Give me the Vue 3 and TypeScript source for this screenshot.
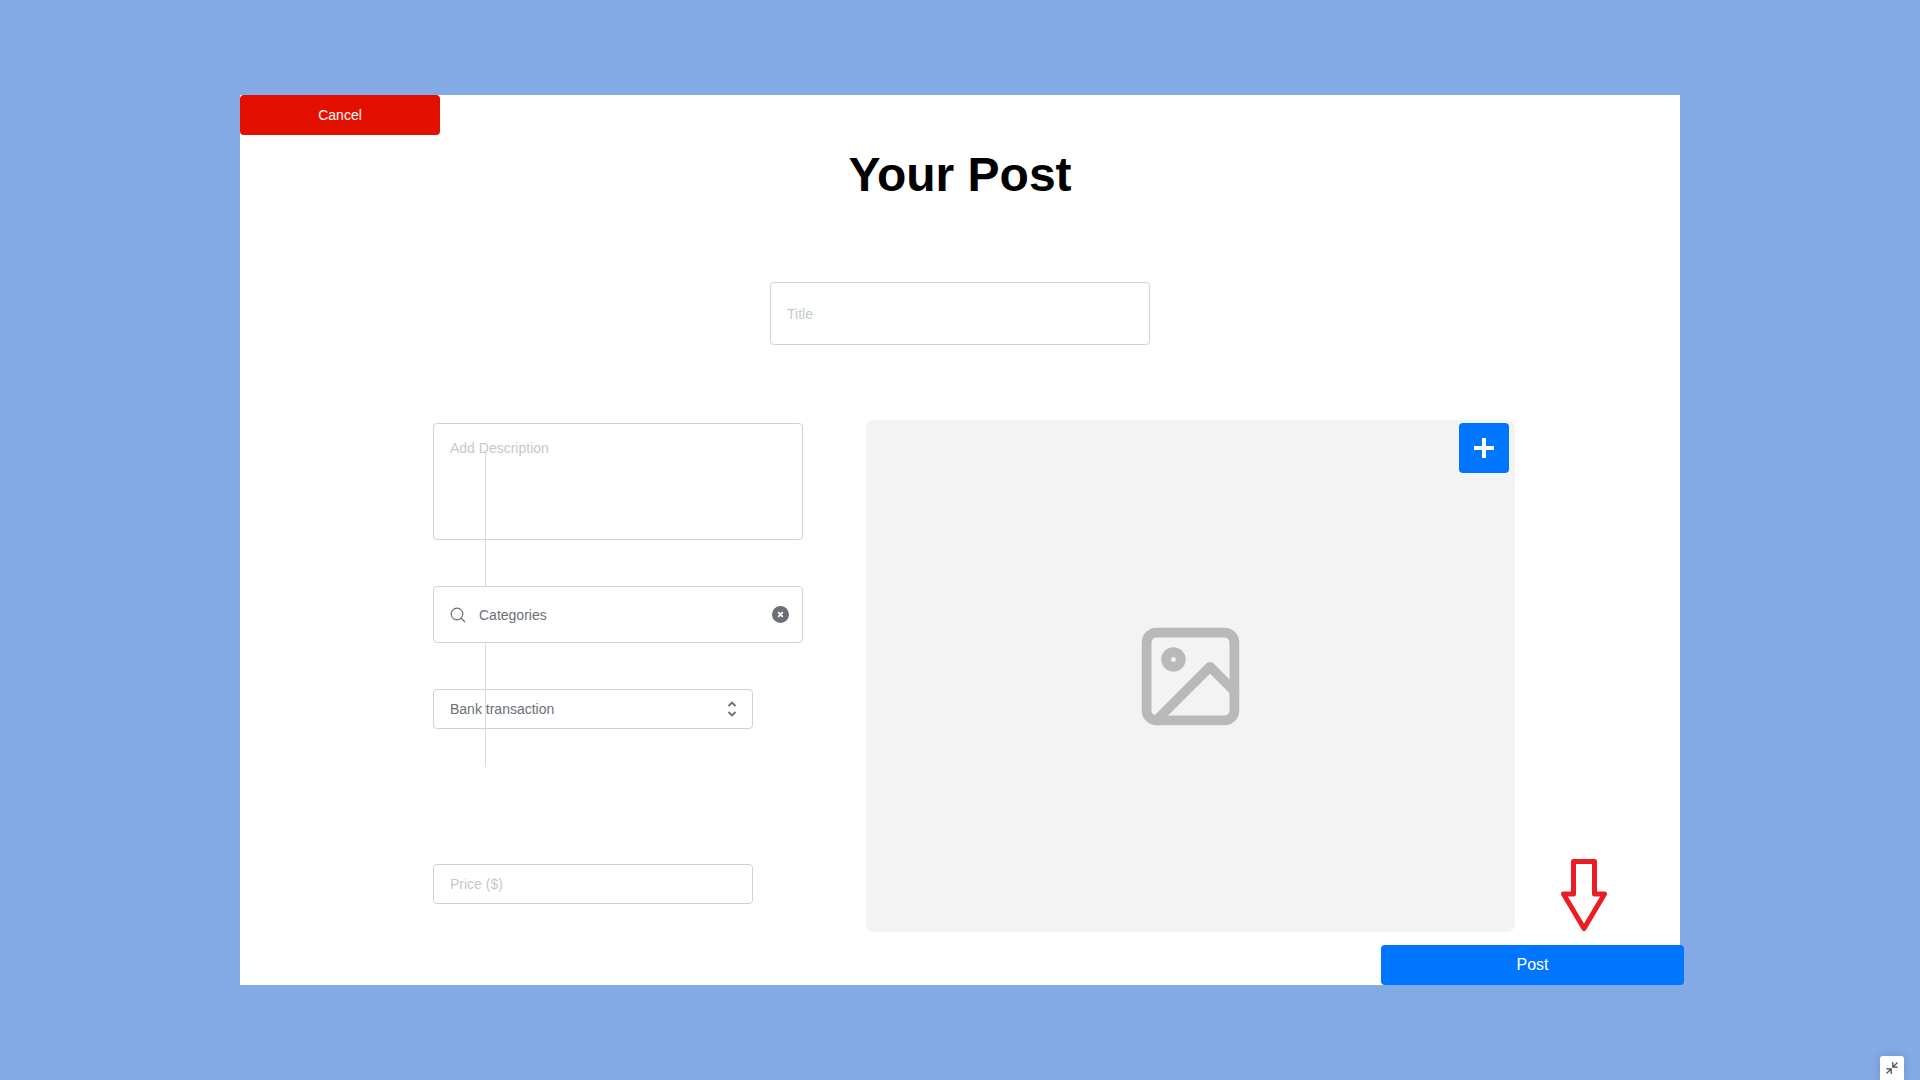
<script setup lang="ts">
import { ref } from 'vue'

const title = ref('')
const description = ref('')
const category = ref('Categories')
const payment = ref('Bank transaction')
const price = ref('')

const paymentMethods: string[] = ['Bank transaction']
</script>

<template>
  <main class="page">
    <form class="card" @submit.prevent>
      <button type="button" class="btn btn-cancel">Cancel</button>
      <h1 class="heading">Your Post</h1>
      <input v-model="title" class="field field-title" type="text" placeholder="Title" aria-label="Title" />

      <div class="content">
        <div class="fields">
          <textarea
            v-model="description"
            class="field field-description"
            placeholder="Add Description"
            aria-label="Description"
          ></textarea>

          <div class="search">
            <svg class="search-icon" viewBox="0 0 16 16" aria-hidden="true">
              <circle cx="7" cy="7" r="5.8" />
              <path d="M11 11l4 4" />
            </svg>
            <input v-model="category" class="search-input" type="text" aria-label="Categories" />
            <button type="button" class="clear" aria-label="Clear categories" @click="category = ''">
              <svg viewBox="0 0 17 17" aria-hidden="true">
                <circle cx="8.5" cy="8.5" r="8.5" />
                <path d="M6.2 6.2l4.6 4.6M10.8 6.2l-4.6 4.6" />
              </svg>
            </button>
          </div>

          <div class="select-wrap">
            <select v-model="payment" class="field field-short" aria-label="Payment method">
              <option v-for="method in paymentMethods" :key="method">{{ method }}</option>
            </select>
            <svg class="chevrons" viewBox="0 0 10 16" aria-hidden="true">
              <path d="M1.5 5L5 1.5L8.5 5M1.5 11L5 14.5L8.5 11" />
            </svg>
          </div>

          <input
            v-model="price"
            class="field field-short field-price"
            type="text"
            placeholder="Price ($)"
            aria-label="Price in dollars"
          />
          <div class="divider"></div>
        </div>

        <div class="picture">
          <svg class="picture-icon" viewBox="0 0 24 24" aria-hidden="true">
            <rect x="3" y="3" width="18" height="18" rx="2" />
            <circle cx="8.5" cy="8.5" r="1.5" />
            <path d="M21 15l-5-5L5 21" />
          </svg>
          <button type="button" class="add" aria-label="Add picture">
            <svg viewBox="0 0 20 20" aria-hidden="true"><path d="M10 0v20M0 10h20" /></svg>
          </button>
        </div>
      </div>

      <button type="submit" class="btn btn-post">Post</button>

      <svg class="arrow" viewBox="0 0 46 72" aria-hidden="true">
        <path d="M12.5 2.5H33.5V35H43.5L23 69.5L2.5 35H12.5Z" />
      </svg>
    </form>

    <button type="button" class="collapse" aria-label="Exit full screen">
      <svg viewBox="0 0 12 12" aria-hidden="true">
        <path d="M11.5 .5L7 5M6.8 0v5.2h5M.5 11.5L5 7M.2 6.8h5V12" />
      </svg>
    </button>
  </main>
</template>

<style>
body {
  margin: 0;
  background: #84aae5;
}
</style>

<style scoped>
.page,
.page * {
  box-sizing: border-box;
}

.page {
  min-height: 100vh;
  display: flex;
  align-items: center;
  justify-content: center;
  font-family: "Liberation Sans", Arial, sans-serif;
  font-size: 14px;
}

.card {
  position: relative;
  width: 75%;
  display: flex;
  flex-direction: column;
  background: #fff;
}

button,
input,
select,
textarea {
  font: inherit;
  margin: 0;
}

.btn {
  height: 40px;
  border: 0;
  border-radius: 4px;
  color: #fff;
  cursor: pointer;
}

.btn-cancel {
  width: 200px;
  background: #e31000;
}

.heading {
  margin: 12px 0 79px;
  font-size: 48px;
  line-height: 56px;
  font-weight: 700;
  text-align: center;
  color: #000;
}

.field {
  display: block;
  width: 100%;
  padding: 0 16px;
  border: 1px solid #d0d3d6;
  border-radius: 4px;
  outline: 0;
  background: #fff;
  color: #6a7076;
}

.field::placeholder {
  color: #c3c9cb;
  opacity: 1;
}

.field-title {
  width: 380px;
  height: 63px;
  align-self: center;
}

.content {
  display: flex;
  gap: 63px;
  margin: 75px 165px 13px 193px;
}

.fields {
  position: relative;
  flex: 0 0 370px;
  padding-top: 3px;
}

.field-description {
  height: 117px;
  padding: 14px 16px;
  line-height: 20px;
  resize: none;
}

.search {
  position: relative;
  z-index: 2;
  display: flex;
  align-items: center;
  height: 57px;
  margin: 46px 0;
  padding: 0 13px 0 16px;
  border: 1px solid #d0d3d6;
  border-radius: 4px;
  background: #fff;
}

.search-icon {
  width: 16px;
  height: 16px;
  fill: none;
  stroke: #6a7076;
  stroke-width: 1.2;
}

.search-input {
  flex: 1;
  min-width: 0;
  padding: 0 0 0 13px;
  border: 0;
  outline: 0;
  background: transparent;
  color: #6a7076;
}

.clear {
  display: flex;
  width: 17px;
  height: 17px;
  padding: 0;
  border: 0;
  background: transparent;
  cursor: pointer;
}

.clear svg {
  width: 100%;
  height: 100%;
  fill: #6a7076;
  stroke: none;
}

.clear path {
  stroke: #fff;
  stroke-width: 1.7;
}

.select-wrap {
  position: relative;
  width: 320px;
}

.field-short {
  width: 320px;
  height: 40px;
}

select.field {
  appearance: none;
}

.chevrons {
  position: absolute;
  top: 12px;
  right: 16px;
  width: 10px;
  height: 16px;
  fill: none;
  stroke: #6a7076;
  stroke-width: 1.8;
  pointer-events: none;
}

.field-price {
  margin-top: 135px;
}

.divider {
  position: absolute;
  z-index: 1;
  top: 32px;
  left: 52px;
  width: 1px;
  height: 315px;
  background: #d9dadc;
}

.picture {
  position: relative;
  flex: 1;
  height: 512px;
  display: flex;
  align-items: center;
  justify-content: center;
  border-radius: 8px;
  background: #f3f3f3;
}

.picture-icon {
  width: 117px;
  height: 117px;
  fill: none;
  stroke: #b9b9b9;
  stroke-width: 2;
  stroke-linecap: round;
  stroke-linejoin: round;
}

.add {
  position: absolute;
  top: 3px;
  right: 6px;
  display: flex;
  align-items: center;
  justify-content: center;
  width: 50px;
  height: 50px;
  padding: 0;
  border: 0;
  border-radius: 4px;
  background: #0075ff;
  cursor: pointer;
}

.add svg {
  width: 20px;
  height: 20px;
  stroke: #fff;
  stroke-width: 4;
}

.btn-post {
  width: 303px;
  align-self: flex-end;
  margin-right: -4px;
  background: #0075ff;
  font-size: 16px;
}

.arrow {
  position: absolute;
  right: 73px;
  bottom: 54px;
  width: 46px;
  height: 72px;
  fill: none;
  stroke: #ed1c24;
  stroke-width: 5;
  stroke-linejoin: round;
}

.collapse {
  position: fixed;
  right: 16px;
  bottom: 0;
  display: flex;
  align-items: center;
  justify-content: center;
  width: 24px;
  height: 24px;
  padding: 0;
  border: 0;
  border-radius: 3px 3px 0 0;
  background: #fff;
  box-shadow: 0 0 8px rgba(0, 0, 0, 0.15);
  cursor: pointer;
}

.collapse svg {
  width: 12px;
  height: 12px;
  fill: none;
  stroke: #4a5356;
  stroke-width: 1.3;
}
</style>
